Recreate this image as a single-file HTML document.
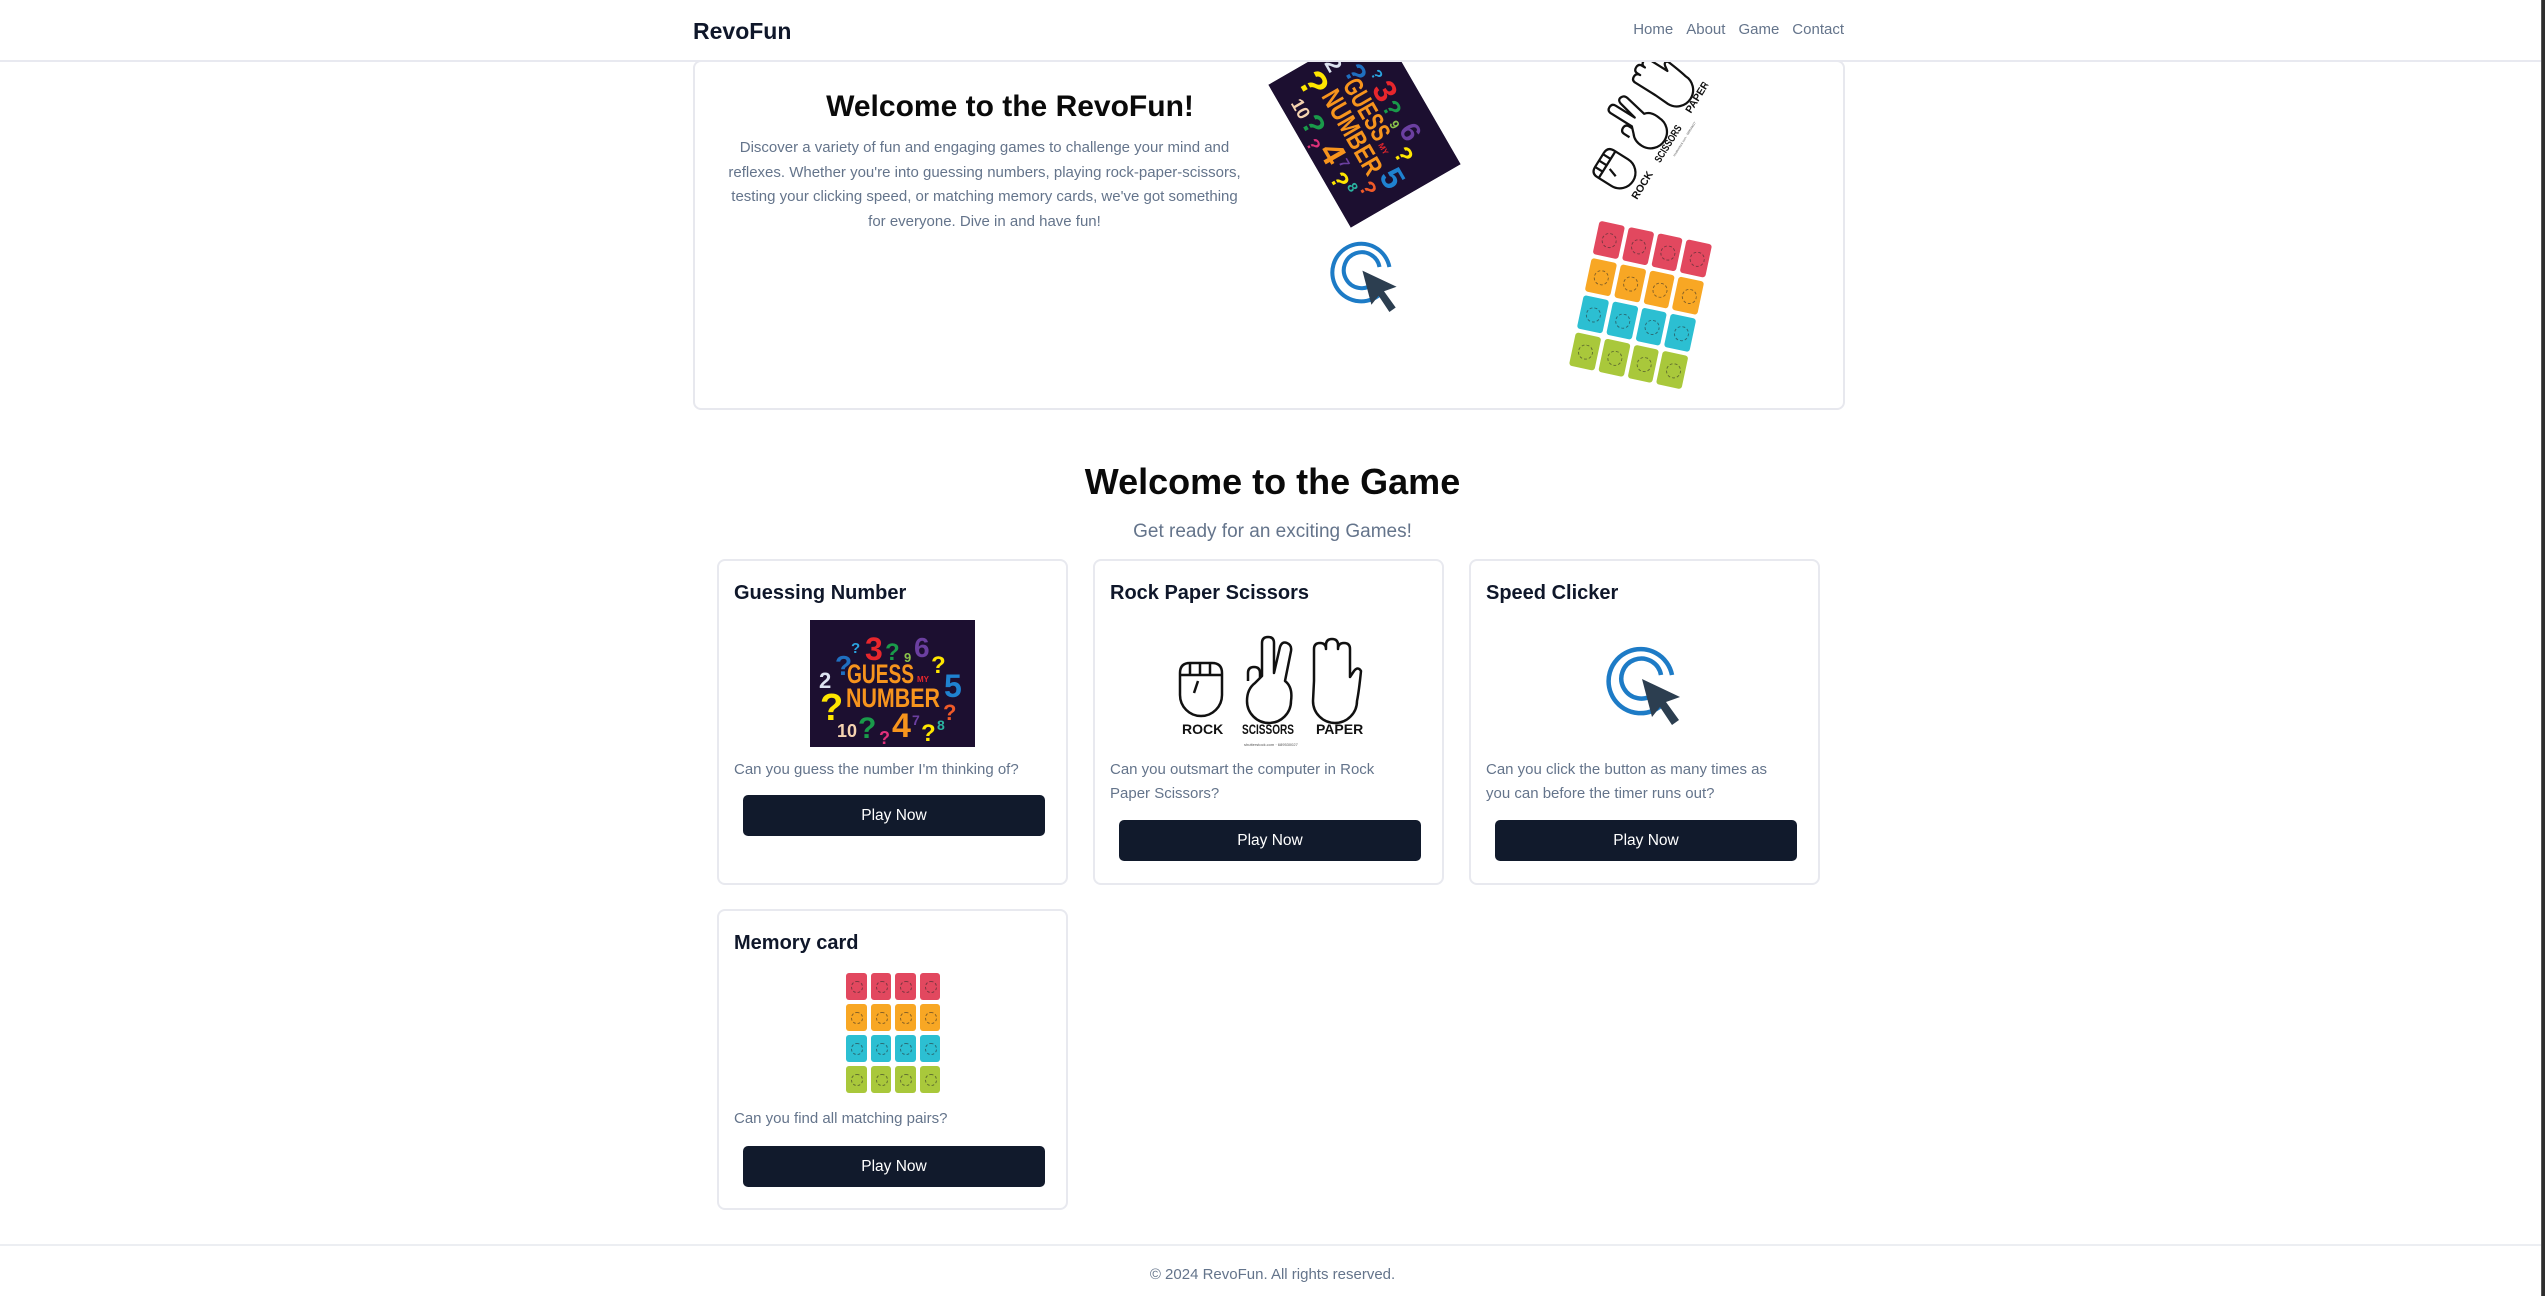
<!DOCTYPE html>
<html><head><meta charset="utf-8">
<style>
*{box-sizing:border-box;margin:0;padding:0}
html,body{width:2545px;height:1296px;overflow:hidden;background:#fff;font-family:"Liberation Sans",sans-serif;color:#111827}
.abs{position:absolute}
.nav{position:absolute;left:0;top:0;width:2545px;height:62px;background:#fff;border-bottom:2px solid #e8e9f0;z-index:10}
.logo{position:absolute;left:693px;top:18px;font-size:23px;font-weight:bold;color:#0f172a}
.links{position:absolute;right:701px;top:21px;font-size:15px;color:#64748b}
.links span{margin-left:13px}
.hero{position:absolute;left:693px;top:60px;width:1152px;height:350px;border:2px solid #e7e8ee;border-radius:8px;background:#fff}
.card{position:absolute;width:351px;border:2px solid #e8e9ef;border-radius:8px;background:#fff}
.ct{position:absolute;left:15px;top:21px;font-size:20px;font-weight:bold;color:#0f172a}
.cd{position:absolute;left:15px;font-size:15px;line-height:24px;color:#64748b;width:300px}
.btn{position:absolute;left:24px;width:302px;height:41px;background:#111a2c;border-radius:5px;color:#fff;font-size:15.5px;text-align:center;line-height:41px}
.mem{display:grid;grid-template-columns:repeat(4,1fr);gap:4px}
.mem div{border-radius:3px;position:relative}
.mem div::after{content:"";position:absolute;left:25%;top:28%;width:50%;height:40%;border:1px dashed rgba(40,40,40,.55);border-radius:50%}
.r{background:#e2485f}.o{background:#f8a724}.c{background:#2cbfd2}.g{background:#a9c83b}
</style></head><body>
<div class="nav"><div class="logo">RevoFun</div><div class="links"><span>Home</span><span>About</span><span>Game</span><span>Contact</span></div></div>

<div class="hero"></div>
<div class="abs" style="left:785px;top:90px;width:450px;text-align:center;font-size:30px;font-weight:bold;color:#0a0a0a">Welcome to the RevoFun!</div>
<div class="abs" style="left:727px;top:136px;width:515px;text-align:center;font-size:15px;line-height:24.5px;color:#64748b">Discover a variety of fun and engaging games to challenge your mind and reflexes. Whether you're into guessing numbers, playing rock-paper-scissors, testing your clicking speed, or matching memory cards, we've got something for everyone. Dive in and have fun!</div>

<!-- hero images -->
<svg class="abs" style="left:1282px;top:61px;width:165px;height:127px;transform:rotate(60deg);z-index:5" viewBox="0 0 165 127">
<rect width="165" height="127" fill="#1c0f30"/>
<g font-family="Liberation Sans Narrow, Liberation Sans, sans-serif" font-weight="bold">
<text x="41" y="33" font-size="15" fill="#2aa4e0">?</text>
<text x="55" y="40" font-size="32" fill="#e8262c">3</text>
<text x="75" y="40" font-size="24" fill="#1a9a4a">?</text>
<text x="94" y="42" font-size="13" fill="#8bc34a">9</text>
<text x="104" y="37" font-size="28" fill="#6b3fa0">6</text>
<text x="121" y="53" font-size="24" fill="#ffe600">?</text>
<text x="25" y="55" font-size="28" fill="#1f6fc0">?</text>
<text x="9" y="68" font-size="22" fill="#dde3f0">2</text>
<text x="37" y="63" font-size="27" fill="#f7941d" textLength="67" lengthAdjust="spacingAndGlyphs">GUESS</text>
<text x="107" y="62" font-size="8" fill="#e8262c">MY</text>
<text x="134" y="77" font-size="32" fill="#1f82d0">5</text>
<text x="10" y="100" font-size="38" fill="#ffe600">?</text>
<text x="36" y="87" font-size="27" fill="#f7941d" textLength="94" lengthAdjust="spacingAndGlyphs">NUMBER</text>
<text x="133" y="100" font-size="22" fill="#f05a28">?</text>
<text x="27" y="117" font-size="18" fill="#f5d3b0">10</text>
<text x="48" y="118" font-size="30" fill="#1a9a4a">?</text>
<text x="69" y="124" font-size="18" fill="#e0307a">?</text>
<text x="82" y="117" font-size="34" fill="#f7941d">4</text>
<text x="102" y="105" font-size="14" fill="#6b3fa0">7</text>
<text x="111" y="121" font-size="24" fill="#ffe600">?</text>
<text x="127" y="110" font-size="14" fill="#2ab3a0">8</text>
</g></svg>

<svg class="abs" style="left:1572px;top:84px;width:146px;height:95px;transform:rotate(-58deg)" viewBox="0 0 195 127">
<g fill="#fff" stroke="#111" stroke-width="3" stroke-linejoin="round">
<path d="M12,42 q0,-10 10,-10 h22 q10,0 10,10 v22 a21,21 0 0 1 -42,0 z"/><path d="M12,44 h42 M22,32 v12 M32,32 v12 M42,32 v12 M30,50 l-4,12" fill="none"/>
<path d="M80,50 v-8 q0,-6 6,-6 q6,0 6,6 v8"/><path d="M94,45 v-33 q0,-6 6,-6 q6,0 6,6 v30 l6,-26 q2,-6 7,-4 q5,2 4,8 l-6,30 q8,6 6,20 a22,22 0 0 1 -44,0 q0,-12 8,-18 z"/>
<path d="M146,50 v-32 q0,-6 6,-6 q6,0 6,6 v-4 q0,-6 6,-6 q6,0 6,6 v4 q0,-6 6,-6 q6,0 6,6 v28 l4,-6 q4,-5 7,0 q-2,20 -4,30 a22,22 0 0 1 -44,0 z"/>
</g>
<g font-family="Liberation Sans Narrow, Liberation Sans, sans-serif" font-weight="bold" font-size="14" fill="#111">
<text x="14" y="103">ROCK</text><text x="72" y="103" textLength="56" lengthAdjust="spacingAndGlyphs">SCISSORS</text><text x="150" y="103">PAPER</text></g>
<text x="90" y="115" font-size="4" fill="#555" font-family="Liberation Sans">shutterstock.com · 689530027</text>
</svg>

<svg class="abs" style="left:1328px;top:240px;width:76px;height:72px" viewBox="0 0 80 80">
<path d="M58,58 A32,32 0 1 1 66,30" fill="none" stroke="#1d7bc6" stroke-width="4.5"/>
<path d="M48,49 A20,20 0 1 1 55,30" fill="none" stroke="#1d7bc6" stroke-width="4.5"/>
<polygon points="36,34 74,52 60,57 73,75 66,80 54,62 46,72" fill="#2c3e50"/>
</svg>

<div class="abs mem" style="left:1583px;top:231px;width:115px;height:148px;transform:rotate(12deg)">
<div class="r"></div><div class="r"></div><div class="r"></div><div class="r"></div>
<div class="o"></div><div class="o"></div><div class="o"></div><div class="o"></div>
<div class="c"></div><div class="c"></div><div class="c"></div><div class="c"></div>
<div class="g"></div><div class="g"></div><div class="g"></div><div class="g"></div></div>

<!-- section -->
<div class="abs" style="left:0;top:461px;width:2545px;text-align:center;font-size:36px;font-weight:bold;color:#0a0a0a">Welcome to the Game</div>
<div class="abs" style="left:0;top:521px;width:2545px;text-align:center;font-size:19px;color:#64748b">Get ready for an exciting Games!</div>

<div class="card" style="left:717px;top:559px;height:326px">
<div class="ct">Guessing Number</div>
<svg class="abs" style="left:91px;top:59px;width:165px;height:127px" viewBox="0 0 165 127">
<rect width="165" height="127" fill="#1c0f30"/>
<g font-family="Liberation Sans Narrow, Liberation Sans, sans-serif" font-weight="bold">
<text x="41" y="33" font-size="15" fill="#2aa4e0">?</text>
<text x="55" y="40" font-size="32" fill="#e8262c">3</text>
<text x="75" y="40" font-size="24" fill="#1a9a4a">?</text>
<text x="94" y="42" font-size="13" fill="#8bc34a">9</text>
<text x="104" y="37" font-size="28" fill="#6b3fa0">6</text>
<text x="121" y="53" font-size="24" fill="#ffe600">?</text>
<text x="25" y="55" font-size="28" fill="#1f6fc0">?</text>
<text x="9" y="68" font-size="22" fill="#dde3f0">2</text>
<text x="37" y="63" font-size="27" fill="#f7941d" textLength="67" lengthAdjust="spacingAndGlyphs">GUESS</text>
<text x="107" y="62" font-size="8" fill="#e8262c">MY</text>
<text x="134" y="77" font-size="32" fill="#1f82d0">5</text>
<text x="10" y="100" font-size="38" fill="#ffe600">?</text>
<text x="36" y="87" font-size="27" fill="#f7941d" textLength="94" lengthAdjust="spacingAndGlyphs">NUMBER</text>
<text x="133" y="100" font-size="22" fill="#f05a28">?</text>
<text x="27" y="117" font-size="18" fill="#f5d3b0">10</text>
<text x="48" y="118" font-size="30" fill="#1a9a4a">?</text>
<text x="69" y="124" font-size="18" fill="#e0307a">?</text>
<text x="82" y="117" font-size="34" fill="#f7941d">4</text>
<text x="102" y="105" font-size="14" fill="#6b3fa0">7</text>
<text x="111" y="121" font-size="24" fill="#ffe600">?</text>
<text x="127" y="110" font-size="14" fill="#2ab3a0">8</text>
</g></svg>
<div class="cd" style="top:197px;width:320px">Can you guess the number I'm thinking of?</div>
<div class="btn" style="top:234px">Play Now</div>
</div>

<div class="card" style="left:1093px;top:559px;height:326px">
<div class="ct">Rock Paper Scissors</div>
<svg class="abs" style="left:73px;top:70px;width:195px;height:127px" viewBox="0 0 195 127">
<g fill="#fff" stroke="#111" stroke-width="2.5" stroke-linejoin="round">
<path d="M12,42 q0,-10 10,-10 h22 q10,0 10,10 v22 a21,21 0 0 1 -42,0 z"/><path d="M12,44 h42 M22,32 v12 M32,32 v12 M42,32 v12 M30,50 l-4,12" fill="none"/>
<path d="M80,50 v-8 q0,-6 6,-6 q6,0 6,6 v8"/><path d="M94,45 v-33 q0,-6 6,-6 q6,0 6,6 v30 l6,-26 q2,-6 7,-4 q5,2 4,8 l-6,30 q8,6 6,20 a22,22 0 0 1 -44,0 q0,-12 8,-18 z"/>
<path d="M146,50 v-32 q0,-6 6,-6 q6,0 6,6 v-4 q0,-6 6,-6 q6,0 6,6 v4 q0,-6 6,-6 q6,0 6,6 v28 l4,-6 q4,-5 7,0 q-2,20 -4,30 a22,22 0 0 1 -44,0 z"/>
</g>
<g font-family="Liberation Sans Narrow, Liberation Sans, sans-serif" font-weight="bold" font-size="14" fill="#111">
<text x="14" y="103">ROCK</text><text x="74" y="103" textLength="52" lengthAdjust="spacingAndGlyphs">SCISSORS</text><text x="148" y="103">PAPER</text></g>
<text x="76" y="115" font-size="4" fill="#555" font-family="Liberation Sans">shutterstock.com · 689530027</text>
</svg>
<div class="cd" style="top:197px">Can you outsmart the computer in Rock Paper Scissors?</div>
<div class="btn" style="top:259px">Play Now</div>
</div>

<div class="card" style="left:1469px;top:559px;height:326px">
<div class="ct">Speed Clicker</div>
<svg class="abs" style="left:135px;top:82px;width:80px;height:84px" viewBox="0 0 80 80">
<path d="M58,58 A32,32 0 1 1 66,30" fill="none" stroke="#1d7bc6" stroke-width="4.5"/>
<path d="M48,49 A20,20 0 1 1 55,30" fill="none" stroke="#1d7bc6" stroke-width="4.5"/>
<polygon points="36,34 74,52 60,57 73,75 66,80 54,62 46,72" fill="#2c3e50"/>
</svg>
<div class="cd" style="top:197px">Can you click the button as many times as you can before the timer runs out?</div>
<div class="btn" style="top:259px">Play Now</div>
</div>

<div class="card" style="left:717px;top:909px;height:301px">
<div class="ct">Memory card</div>
<div class="abs mem" style="left:127px;top:62px;width:94px;height:120px">
<div class="r"></div><div class="r"></div><div class="r"></div><div class="r"></div>
<div class="o"></div><div class="o"></div><div class="o"></div><div class="o"></div>
<div class="c"></div><div class="c"></div><div class="c"></div><div class="c"></div>
<div class="g"></div><div class="g"></div><div class="g"></div><div class="g"></div></div>
<div class="cd" style="top:196px">Can you find all matching pairs?</div>
<div class="btn" style="top:235px">Play Now</div>
</div>

<div class="abs" style="left:0;top:1244px;width:2541px;border-top:2px solid #eceef2"></div>
<div class="abs" style="left:0;top:1266px;width:2545px;text-align:center;font-size:15px;color:#64748b">© 2024 RevoFun. All rights reserved.</div>
<div class="abs" style="left:2541px;top:0;width:4px;height:1296px;background:#2d2d2d;border-left:1px solid #555;z-index:20"></div>
</body></html>
